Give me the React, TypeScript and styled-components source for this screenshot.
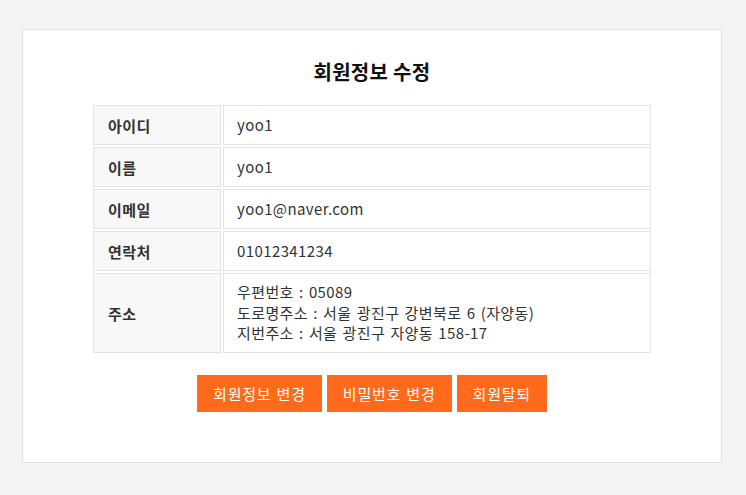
import React from "react";
import styled, { createGlobalStyle } from "styled-components";

const GlobalStyle = createGlobalStyle`
  html, body {
    margin: 0;
    padding: 0;
    background: #f4f4f4;
  }
  body {
    font-family: "Noto Sans CJK KR", "Noto Sans", sans-serif;
    color: #333;
  }
`;

const Page = styled.div`
  padding: 29px 24px 32px 22px;
`;

const Card = styled.section`
  box-sizing: border-box;
  width: 700px;
  height: 434px;
  background: #fff;
  border: 1px solid #e3e3e3;
  padding-top: 28px;
  display: flex;
  flex-direction: column;
  align-items: center;
`;

const Title = styled.h2`
  margin: 0 0 19px;
  font-size: 20px;
  line-height: 28px;
  font-weight: 700;
  color: #111;
  letter-spacing: 0.3px;
`;

const InfoGrid = styled.div`
  display: grid;
  grid-template-columns: 128px 428px;
  gap: 2px;
`;

const Label = styled.div<{ $tall?: boolean }>`
  box-sizing: border-box;
  height: ${(p) => (p.$tall ? "80px" : "40px")};
  background: #f8f8f8;
  border: 1px solid #e3e3e3;
  display: flex;
  align-items: center;
  padding-left: 14px;
  font-size: 15px;
  letter-spacing: 0.4px;
  font-weight: 700;
  color: #333;
`;

const Value = styled.div<{ $tall?: boolean }>`
  box-sizing: border-box;
  height: ${(p) => (p.$tall ? "80px" : "40px")};
  background: #fff;
  border: 1px solid #e3e3e3;
  display: flex;
  flex-direction: column;
  justify-content: center;
  padding-left: 13px;
  font-size: 15px;
  letter-spacing: 0.4px;
  word-spacing: 1.5px;
  line-height: 20.5px;
  color: #333;
`;

const Buttons = styled.div`
  display: flex;
  gap: 5px;
  margin-top: 22px;
`;

const ActionButton = styled.button`
  height: 37px;
  padding: 0 16px;
  border: none;
  background: #ff6a1b;
  color: #fff;
  font-family: "Noto Sans CJK KR", "Noto Sans", sans-serif;
  font-size: 15px;
  letter-spacing: 0.8px;
  word-spacing: 1px;
  cursor: pointer;
`;

const rows: { label: string; value: string[] }[] = [
  { label: "아이디", value: ["yoo1"] },
  { label: "이름", value: ["yoo1"] },
  { label: "이메일", value: ["yoo1@naver.com"] },
  { label: "연락처", value: ["01012341234"] },
  {
    label: "주소",
    value: [
      "우편번호 : 05089",
      "도로명주소 : 서울 광진구 강변북로 6 (자양동)",
      "지번주소 : 서울 광진구 자양동 158-17",
    ],
  },
];

export default function App() {
  return (
    <>
      <GlobalStyle />
      <Page>
        <Card>
          <Title>회원정보 수정</Title>
          <InfoGrid>
            {rows.map((r) => {
              const tall = r.value.length > 1;
              return (
                <React.Fragment key={r.label}>
                  <Label $tall={tall}>{r.label}</Label>
                  <Value $tall={tall}>
                    {r.value.map((v) => (
                      <span key={v}>{v}</span>
                    ))}
                  </Value>
                </React.Fragment>
              );
            })}
          </InfoGrid>
          <Buttons>
            <ActionButton>회원정보 변경</ActionButton>
            <ActionButton>비밀번호 변경</ActionButton>
            <ActionButton>회원탈퇴</ActionButton>
          </Buttons>
        </Card>
      </Page>
    </>
  );
}
